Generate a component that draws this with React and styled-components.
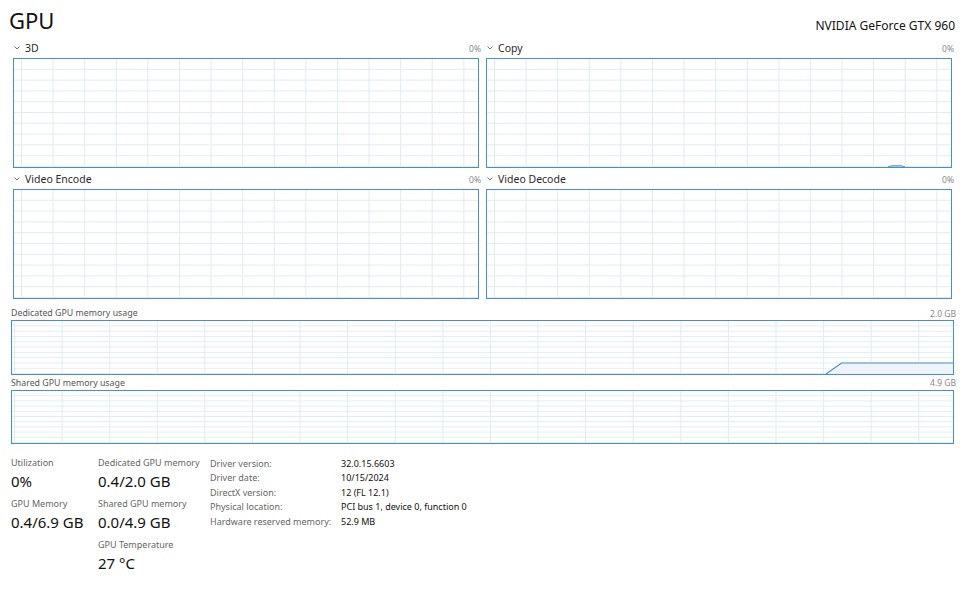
import React from 'react';
import styled, { createGlobalStyle } from 'styled-components';

const Global = createGlobalStyle`
  html, body { margin: 0; padding: 0; background: #fff; }
  body { font-family: "Noto Sans", "Open Sans", sans-serif; color: #000; }
`;

const BLUE = '#4a8fc4';
const GRID = '#e0ebf4';

const Page = styled.div`
  width: 964px;
  height: 600px;
  box-sizing: border-box;
  padding: 0 10px 0 11px;
  display: flex;
  flex-direction: column;
  overflow: hidden;
`;

const Header = styled.div`
  height: 38px;
  display: flex;
  align-items: flex-start;
  justify-content: space-between;
  margin-left: -2px;
  margin-right: -1px;
`;

const PageTitle = styled.div`
  font-size: 22px;
  line-height: 23px;
  margin-top: 9px;
  color: #111;
`;

const DeviceName = styled.div`
  font-size: 12px;
  line-height: 14px;
  margin-top: 19px;
  color: #111;
`;

const ChartsGrid = styled.div`
  display: grid;
  grid-template-columns: 1fr 1fr;
  column-gap: 7px;
  row-gap: 1px;
  padding: 0 2px;
`;

const Cell = styled.div`
  display: flex;
  flex-direction: column;
`;

const ChartHead = styled.div`
  height: ${p => p.$h || 20}px;
  display: flex;
  align-items: center;
  justify-content: space-between;
  margin-right: -2px;
`;

const ChartTitle = styled.div`
  display: flex;
  align-items: center;
  gap: 5px;
  font-size: 10.5px;
  color: #2a2a2a;
  padding-left: 1px;
`;

const SmallTitle = styled.div`
  font-size: 8.8px;
  color: #555;
`;

const Pct = styled.div`
  font-size: 8.5px;
  color: #888;
`;

const Chart = styled.div`
  position: relative;
  box-sizing: border-box;
  height: ${p => p.$h}px;
  border: 1px solid ${BLUE};
  background-color: #fff;
  background-image:
    linear-gradient(to right, ${GRID} 1px, transparent 1px),
    linear-gradient(to bottom, transparent calc(100% - 1px), ${GRID} calc(100% - 1px));
  background-size: ${p => p.$vs}px 100%, 100% 10%;
  background-position: ${p => p.$vo}px 0, 0 0;
`;

const Overlay = styled.svg`
  position: absolute;
  inset: 0;
  width: 100%;
  height: 100%;
  display: block;
`;

const MemSection = styled.div`
  display: flex;
  flex-direction: column;
  margin-top: 7px;
`;

const Stats = styled.div`
  display: flex;
  margin-top: 12px;
`;

const StatCol = styled.div`
  width: ${p => p.$w}px;
  display: flex;
  flex-direction: column;
  gap: 5px;
`;

const StatBlock = styled.div`
  display: flex;
  flex-direction: column;
`;

const StatLabel = styled.div`
  font-size: 9px;
  line-height: 14px;
  color: #666;
  white-space: nowrap;
`;

const StatValue = styled.div`
  font-size: 15px;
  line-height: 22px;
  color: #111;
  white-space: nowrap;
`;

const InfoTable = styled.div`
  display: grid;
  grid-template-columns: 131px auto;
  grid-auto-rows: 14.5px;
  align-items: center;
  font-size: 9px;
`;

const InfoKey = styled.div`
  color: #666;
  white-space: nowrap;
`;

const InfoVal = styled.div`
  color: #111;
  white-space: nowrap;
`;

const Chevron = () => (
  <svg width="6" height="4" viewBox="0 0 6 4">
    <path d="M0.5 0.5 L3 3 L5.5 0.5" fill="none" stroke="#777" strokeWidth="1" />
  </svg>
);

const engines = [
  { name: '3D' },
  { name: 'Copy', blip: true },
  { name: 'Video Encode' },
  { name: 'Video Decode' },
];

const info = [
  ['Driver version:', '32.0.15.6603'],
  ['Driver date:', '10/15/2024'],
  ['DirectX version:', '12 (FL 12.1)'],
  ['Physical location:', 'PCI bus 1, device 0, function 0'],
  ['Hardware reserved memory:', '52.9 MB'],
];

export default function App() {
  return (
    <>
      <Global />
      <Page>
        <Header>
          <PageTitle>GPU</PageTitle>
          <DeviceName>NVIDIA GeForce GTX 960</DeviceName>
        </Header>

        <ChartsGrid>
          {engines.map(e => (
            <Cell key={e.name}>
              <ChartHead>
                <ChartTitle><Chevron />{e.name}</ChartTitle>
                <Pct>0%</Pct>
              </ChartHead>
              <Chart $h={110} $vs={31.6} $vo={7}>
                {e.blip && (
                  <Overlay viewBox="0 0 464 108" preserveAspectRatio="none">
                    <path d="M401 108 L405 106.6 L414 106.6 L418 108 Z" fill="#e4eef7" stroke={BLUE} strokeWidth="0.8" />
                  </Overlay>
                )}
              </Chart>
            </Cell>
          ))}
        </ChartsGrid>

        <MemSection>
          <ChartHead $h={14}>
            <SmallTitle>Dedicated GPU memory usage</SmallTitle>
            <Pct>2.0 GB</Pct>
          </ChartHead>
          <Chart $h={55} $vs={47.6} $vo={2}>
            <Overlay viewBox="0 0 941 53" preserveAspectRatio="none">
              <path d="M814 53 L829.5 42 L941 42 L941 53 Z" fill="#eef4fa" />
              <path d="M814 53 L829.5 42 L941 42" fill="none" stroke={BLUE} strokeWidth="1.2" />
            </Overlay>
          </Chart>
          <ChartHead $h={15}>
            <SmallTitle>Shared GPU memory usage</SmallTitle>
            <Pct>4.9 GB</Pct>
          </ChartHead>
          <Chart $h={54} $vs={47.6} $vo={2} />
        </MemSection>

        <Stats>
          <StatCol $w={87}>
            <StatBlock>
              <StatLabel>Utilization</StatLabel>
              <StatValue>0%</StatValue>
            </StatBlock>
            <StatBlock>
              <StatLabel>GPU Memory</StatLabel>
              <StatValue>0.4/6.9 GB</StatValue>
            </StatBlock>
          </StatCol>
          <StatCol $w={112}>
            <StatBlock>
              <StatLabel>Dedicated GPU memory</StatLabel>
              <StatValue>0.4/2.0 GB</StatValue>
            </StatBlock>
            <StatBlock>
              <StatLabel>Shared GPU memory</StatLabel>
              <StatValue>0.0/4.9 GB</StatValue>
            </StatBlock>
            <StatBlock>
              <StatLabel>GPU Temperature</StatLabel>
              <StatValue>27 °C</StatValue>
            </StatBlock>
          </StatCol>
          <InfoTable>
            {info.map(([k, v]) => (
              <React.Fragment key={k}>
                <InfoKey>{k}</InfoKey>
                <InfoVal>{v}</InfoVal>
              </React.Fragment>
            ))}
          </InfoTable>
        </Stats>
      </Page>
    </>
  );
}
